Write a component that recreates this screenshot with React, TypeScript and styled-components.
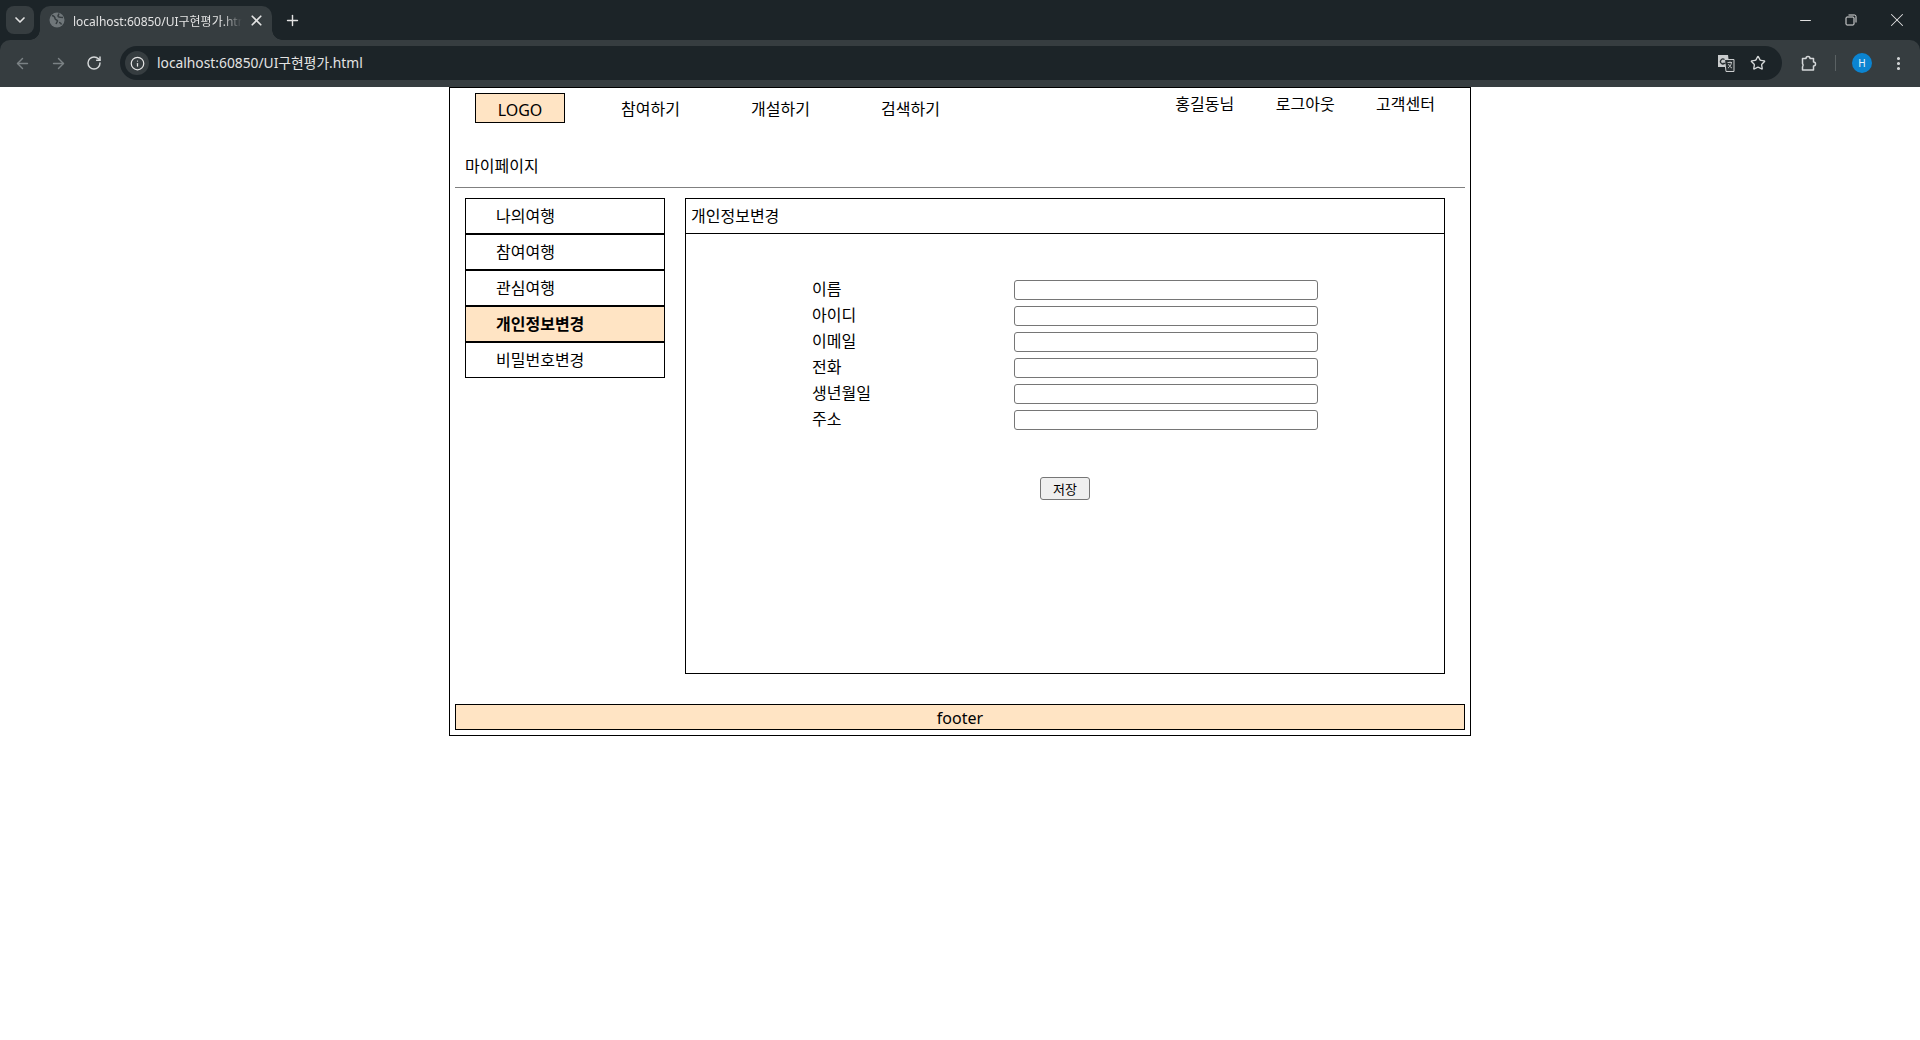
import React from 'react';
import styled, { createGlobalStyle } from 'styled-components';
import { ArrowLeft, ArrowRight, ChevronDown, EllipsisVertical, Info, Minus, Plus, RotateCw, Star, X } from 'lucide-react';

const GlobalStyle = createGlobalStyle`
  html, body {
    margin: 0;
    padding: 0;
    background: #fff;
    font-family: "Noto Sans", "Noto Sans CJK KR", sans-serif;
  }
  * {
    box-sizing: border-box;
  }
`;

const CHROME_DARK = '#1c2428';
const CHROME_LIGHT = '#363d40';
const PEACH = '#ffe4c4';

const Chrome = styled.div`
  height: 87px;
  background: ${CHROME_DARK};
  display: flex;
  flex-direction: column;
  color: #e3e3e3;
`;

const TabStrip = styled.div`
  height: 40px;
  display: flex;
  align-items: flex-end;
  padding-left: 6px;
`;

const TabMenuButton = styled.div`
  width: 28px;
  height: 28px;
  margin-bottom: 6px;
  border-radius: 8px;
  background: ${CHROME_LIGHT};
  display: flex;
  align-items: center;
  justify-content: center;
`;

const Tab = styled.div`
  position: relative;
  width: 232px;
  height: 34px;
  margin-left: 6px;
  padding: 0 7px 6px 9px;
  border-radius: 10px 10px 0 0;
  background: ${CHROME_LIGHT};
  display: flex;
  align-items: center;
  font-size: 12px;

  &::before,
  &::after {
    content: '';
    position: absolute;
    bottom: 0;
    width: 10px;
    height: 10px;
  }
  &::before {
    right: 100%;
    background: radial-gradient(circle at 0 0, transparent 9.500px, ${CHROME_LIGHT} 10px);
  }
  &::after {
    left: 100%;
    background: radial-gradient(circle at 100% 0, transparent 9.500px, ${CHROME_LIGHT} 10px);
  }
`;

const TabTitle = styled.span`
  flex: 1;
  margin: 0 6px 0 8px;
  padding-top: 2px;
  white-space: nowrap;
  overflow: hidden;
  mask-image: linear-gradient(to right, #000 88%, transparent 100%);
`;

const NewTab = styled.div`
  width: 28px;
  height: 28px;
  margin: 0 0 6px 6px;
  display: flex;
  align-items: center;
  justify-content: center;
`;

const WindowButtons = styled.div`
  margin-left: auto;
  height: 40px;
  display: flex;
`;

const WindowButton = styled.div`
  width: 46px;
  display: flex;
  align-items: center;
  justify-content: center;
`;

const Toolbar = styled.div`
  position: relative;
  height: 47px;
  background: ${CHROME_LIGHT};
  border-radius: 10px 10px 0 0;
  display: flex;
  align-items: center;
  padding: 0 0 1px 4px;
`;

const ToolButton = styled.div<{ $dim?: boolean }>`
  width: 36px;
  height: 32px;
  display: flex;
  align-items: center;
  justify-content: center;
  color: ${(p) => (p.$dim ? '#7b8285' : '#d5d8d9')};
`;

const Omnibox = styled.div`
  width: 1662px;
  height: 34px;
  margin: 0 9px 0 8px;
  border-radius: 17px;
  background: ${CHROME_DARK};
  display: flex;
  align-items: center;
  padding: 0 16px 0 5px;
  font-size: 13.800px;
`;

const SiteInfo = styled.div`
  width: 24px;
  height: 24px;
  border-radius: 50%;
  background: ${CHROME_LIGHT};
  display: flex;
  align-items: center;
  justify-content: center;
  margin-right: 8px;
`;

const AddressText = styled.span`
  padding-bottom: 2px;
`;

const OmniIcons = styled.div`
  margin-left: auto;
  display: flex;
  align-items: center;
  gap: 15px;
  color: #d5d8d9;
`;

const ToolDivider = styled.div`
  width: 1px;
  height: 16px;
  margin: 0 16px 0 8px;
  background: #5a6163;
`;

const Avatar = styled.div`
  width: 20px;
  height: 20px;
  margin-right: 8px;
  border-radius: 50%;
  background: #0b84d1;
  color: #e8f4fb;
  font-size: 10px;
  display: flex;
  align-items: center;
  justify-content: center;
`;

const Page = styled.div`
  width: 1022px;
  height: 649px;
  margin-left: 449px;
  border: 1px solid #000;
  padding: 0 5px;
  color: #000;
  font-size: 16px;
  line-height: 21px;
`;

const Header = styled.header`
  height: 64px;
  display: flex;
  align-items: flex-start;
  padding-left: 20px;
`;

const Logo = styled.div`
  width: 90px;
  height: 30px;
  margin-top: 5px;
  border: 1px solid #000;
  background: ${PEACH};
  line-height: 32px;
  text-align: center;
`;

const MainNav = styled.nav`
  display: flex;
  margin-left: 56px;
  padding-top: 11px;
`;

const MainLink = styled.a`
  width: 130px;
`;

const UserNav = styled.nav`
  display: flex;
  margin-left: auto;
  padding: 6px 30px 0 0;
  gap: 41.500px;
`;

const PageTitle = styled.h2`
  margin: 0;
  padding-left: 10px;
  height: 35px;
  padding-top: 4px;
  font-size: 16px;
  font-weight: 400;
`;

const Rule = styled.hr`
  height: 1px;
  margin: 0 0 10px;
  border: 0;
  background: #808080;
`;

const Content = styled.div`
  display: flex;
  align-items: flex-start;
  padding-left: 10px;
  gap: 20px;
`;

const SideMenu = styled.ul`
  width: 200px;
  margin: 0;
  padding: 0;
  list-style: none;
`;

const SideItem = styled.li<{ $active?: boolean }>`
  height: 36px;
  border: 1px solid #000;
  padding-left: 30px;
  line-height: 35px;
  background: ${(p) => (p.$active ? PEACH : '#fff')};
  font-weight: ${(p) => (p.$active ? 700 : 400)};
`;

const Panel = styled.section`
  width: 760px;
  height: 476px;
  border: 1px solid #000;
`;

const PanelTitle = styled.div`
  height: 35px;
  border-bottom: 1px solid #000;
  padding-left: 5px;
  line-height: 35px;
`;

const InfoForm = styled.form`
  padding-top: 46px;
`;

const Fields = styled.div`
  display: grid;
  grid-template-columns: 202px 304px;
  grid-auto-rows: 26px;
  padding-left: 126px;
`;

const FieldLabel = styled.label`
  line-height: 18px;
`;

const FieldInput = styled.input`
  display: block;
  width: 304px;
  height: 20px;
  padding: 1px 2px;
  border: 1px solid #767676;
  border-radius: 3px;
  background: #fff;
`;

const SaveRow = styled.div`
  display: flex;
  justify-content: center;
  padding-top: 41px;
`;

const SaveButton = styled.button`
  width: 50px;
  height: 23px;
  padding: 0;
  border: 1px solid #767676;
  border-radius: 3px;
  background: #efefef;
  color: #000;
  font-family: "Noto Sans CJK KR", sans-serif;
  font-size: 13px;
  line-height: 18px;
`;

const Footer = styled.footer`
  height: 26px;
  margin-top: 30px;
  border: 1px solid #000;
  background: ${PEACH};
  line-height: 26px;
  text-align: center;
`;

const sideItems = ['나의여행', '참여여행', '관심여행', '개인정보변경', '비밀번호변경'];
const fields = ['이름', '아이디', '이메일', '전화', '생년월일', '주소'];

const FaviconIcon = () => (
  <svg width="16" height="16" viewBox="0 0 16 16">
    <circle cx="8" cy="8" r="7.500" fill="#70777a" />
    <path d="M3 3.500c2 .5 3 1.500 3 3s2 1 2.500 2.500L7 12M10 1.500 9 4c0 1 2 1.500 5 1.500M10 10.500c1 0 2 .5 2.500 2" fill="none" stroke="#363d40" strokeWidth="1.500" />
  </svg>
);

const TranslateIcon = () => (
  <svg width="18" height="18" viewBox="0 0 18 18">
    <path d="M1 1h10l1.500 12H1z" fill="#c9cccd" />
    <path d="M7.500 5.500h9.500v12H9z" fill="#2a3134" stroke="#c9cccd" strokeWidth="1" />
    <path d="M7.500 5.500a2.500 2.500 0 1 0 0 4h-2" fill="none" stroke="#2a3134" strokeWidth="1.300" />
    <path d="M10.500 8.500h4.500M13 7.500v1M14.500 8.500c-.5 3-2 4.500-3.500 5.500M11.500 10c.5 1.500 1.500 3 3.500 4" fill="none" stroke="#c9cccd" strokeWidth=".9" />
  </svg>
);

const RestoreIcon = () => (
  <svg width="12" height="12" viewBox="0 0 12 12" fill="none" stroke="#e3e3e3" strokeWidth="1">
    <rect x="1" y="3" width="8" height="8" rx="1" />
    <path d="M3.500 1h6a1.500 1.500 0 0 1 1.500 1.500v6" />
  </svg>
);

const ExtensionIcon = () => (
  <svg width="18" height="18" viewBox="0 0 18 18" fill="none" stroke="#d5d8d9" strokeWidth="1.500">
    <path d="M2.500 4.500h3.500a2 2 0 0 1 4 0h3.500v3.500a2 2 0 0 1 0 4v4H2.500v-3c.8-1 .8-2.500 0-3.500z" strokeLinejoin="round" />
  </svg>
);

const BrowserChrome = () => (
  <Chrome>
    <TabStrip>
      <TabMenuButton><ChevronDown size={16} strokeWidth={2.5} /></TabMenuButton>
      <Tab>
        <FaviconIcon />
        <TabTitle>localhost:60850/UI구현평가.html</TabTitle>
        <X size={17} strokeWidth={2.4} />
      </Tab>
      <NewTab><Plus size={17} strokeWidth={2} /></NewTab>
      <WindowButtons>
        <WindowButton><Minus size={17} strokeWidth={1.4} /></WindowButton>
        <WindowButton><RestoreIcon /></WindowButton>
        <WindowButton><X size={22} strokeWidth={1.1} /></WindowButton>
      </WindowButtons>
    </TabStrip>
    <Toolbar>
      <ToolButton $dim><ArrowLeft size={17} /></ToolButton>
      <ToolButton $dim><ArrowRight size={17} /></ToolButton>
      <ToolButton><RotateCw size={16} strokeWidth={2.2} /></ToolButton>
      <Omnibox>
        <SiteInfo><Info size={15} /></SiteInfo>
        <AddressText>localhost:60850/UI구현평가.html</AddressText>
        <OmniIcons>
          <TranslateIcon />
          <Star size={16} strokeWidth={2} />
        </OmniIcons>
      </Omnibox>
      <ToolButton><ExtensionIcon /></ToolButton>
      <ToolDivider />
      <Avatar>H</Avatar>
      <ToolButton><EllipsisVertical size={17} strokeWidth={2.4} /></ToolButton>
    </Toolbar>
  </Chrome>
);

const App = () => {
  return (
    <>
      <GlobalStyle />
      <BrowserChrome />
      <Page>
        <Header>
          <Logo>LOGO</Logo>
          <MainNav>
            <MainLink>참여하기</MainLink>
            <MainLink>개설하기</MainLink>
            <MainLink>검색하기</MainLink>
          </MainNav>
          <UserNav>
            <span>홍길동님</span>
            <span>로그아웃</span>
            <span>고객센터</span>
          </UserNav>
        </Header>
        <PageTitle>마이페이지</PageTitle>
        <Rule />
        <Content>
          <SideMenu>
            {sideItems.map((item) => (
              <SideItem key={item} $active={item === '개인정보변경'}>{item}</SideItem>
            ))}
          </SideMenu>
          <Panel>
            <PanelTitle>개인정보변경</PanelTitle>
            <InfoForm>
              <Fields>
                {fields.map((field) => (
                  <React.Fragment key={field}>
                    <FieldLabel>{field}</FieldLabel>
                    <FieldInput />
                  </React.Fragment>
                ))}
              </Fields>
              <SaveRow>
                <SaveButton type="button">저장</SaveButton>
              </SaveRow>
            </InfoForm>
          </Panel>
        </Content>
        <Footer>footer</Footer>
      </Page>
    </>
  );
};

export default App;
